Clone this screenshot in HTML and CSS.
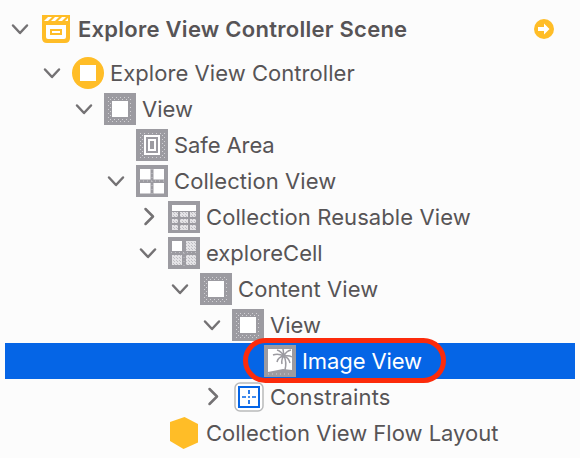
FILE: index.html
```
<!DOCTYPE html>
<html lang="en">
<head>
<meta charset="utf-8">
<title>Document Outline</title>
<link rel="stylesheet" href="styles.css">
</head>
<body>
<svg class="defs" aria-hidden="true">
  <defs>
    <pattern id="dots" width="4" height="4" patternUnits="userSpaceOnUse"><path d="M0 0h1v1h-1zM2 2h1v1h-1z" fill="#d2d1d5"/></pattern>
    <pattern id="mesh" width="3" height="3" patternUnits="userSpaceOnUse"><path d="M0 0h3v3h-3z" fill="#e4e3e6"/><path d="M0 0h1v1h-1zM2 2h1v1h-1z" fill="#bebdc2"/></pattern>
    <symbol id="down" viewBox="0 0 24 24"><path d="M5 8.500l7 7.500 7-7.500" fill="none" stroke="#747274" stroke-width="2.500" stroke-linecap="round" stroke-linejoin="round"/></symbol>
    <symbol id="right" viewBox="0 0 24 24"><path d="M9.500 4l7.500 7.500-7.500 7.500" fill="none" stroke="#747274" stroke-width="2.500" stroke-linecap="round" stroke-linejoin="round"/></symbol>
    <symbol id="view" viewBox="0 0 32 32"><path d="M0 0h32v32H0z" fill="#9c9ba1"/><path d="M4 4h24v26H4z" fill="url(#dots)"/><path d="M7 7h18v18H7z" fill="#9c9ba1"/><path d="M8 8h16v16H8z" fill="#fff"/></symbol>
  </defs>
</svg>
<main class="outline">
  <div class="row scene">
    <svg class="chevron"><use href="#down"/></svg>
    <svg class="icon" viewBox="0 0 32 32"><path d="M2 2h28v23q0 5-5 5H7q-5 0-5-5z" fill="#ffbd27"/><path d="M4 8l4-4h4L8 8zM11 8l4-4h4l-4 4zM18 8l4-4h4l-4 4zM25 8l3-3v3z" fill="#fff"/><path d="M6 12h20v12q0 2-2 2H8q-2 0-2-2z" fill="#fff"/><path d="M11 17h10v4H11z" fill="#fff" stroke="#ffbd27" stroke-width="2"/></svg>
    <span class="label">Explore View Controller Scene</span>
    <svg class="entry" viewBox="0 0 20 20"><circle cx="10" cy="10" r="10" fill="#ffbd27"/><path d="M4 8h6V4.500l5.500 5.500-5.500 5.500V12H4z" fill="#fff"/></svg>
  </div>
  <div class="row controller">
    <svg class="chevron"><use href="#down"/></svg>
    <svg class="icon" viewBox="0 0 32 32"><circle cx="16" cy="16" r="16" fill="#ffbd27"/><path d="M8 8h16v16H8z" fill="#fff"/></svg>
    <span class="label">Explore View Controller</span>
  </div>
  <div class="row root-view">
    <svg class="chevron"><use href="#down"/></svg>
    <svg class="icon"><use href="#view"/></svg>
    <span class="label">View</span>
  </div>
  <div class="row safe-area">
    <span class="chevron"></span>
    <svg class="icon" viewBox="0 0 32 32"><path d="M0 0h32v32H0z" fill="#9c9ba1"/><path d="M3 4h26v26H3z" fill="url(#dots)"/><path d="M7 5h18v22H7z" fill="#9c9ba1"/><path d="M9 7h14v18H9z" fill="#9c9ba1" stroke="#fff" stroke-width="2"/><path d="M13 11h6v10h-6z" fill="none" stroke="#fff" stroke-width="2"/></svg>
    <span class="label">Safe Area</span>
  </div>
  <div class="row collection">
    <svg class="chevron"><use href="#down"/></svg>
    <svg class="icon" viewBox="0 0 32 32"><path d="M0 0h32v32H0z" fill="#9c9ba1"/><path d="M4 4h10.500v10.500H4zM17.500 4H28v10.500H17.500zM4 18h10.500v10.500H4zM17.500 18H28v10.500H17.500z" fill="#fff"/><path d="M3 16h26M16 4v25" stroke="#c8c7cc" stroke-dasharray="1 3"/></svg>
    <span class="label">Collection View</span>
  </div>
  <div class="row reusable">
    <svg class="chevron collapsed"><use href="#right"/></svg>
    <svg class="icon" viewBox="0 0 32 32"><path d="M0 0h32v32H0z" fill="#9c9ba1"/><path d="M4 4h24v6H4z" fill="#fff"/><path d="M4 11h6v5H4zM12 11h8v5h-8zM22 11h6v5h-6zM4 18h6v4H4zM12 18h8v4h-8zM22 18h6v4h-6zM4 24h6v5H4zM12 24h8v5h-8zM22 24h6v5h-6z" fill="url(#mesh)"/></svg>
    <span class="label">Collection Reusable View</span>
  </div>
  <div class="row cell">
    <svg class="chevron"><use href="#down"/></svg>
    <svg class="icon" viewBox="0 0 32 32"><path d="M0 0h32v32H0z" fill="#9c9ba1"/><path d="M4 4h10v10H4z" fill="#fff"/><path d="M18 4h10v10H18zM4 18h10v10H4zM18 18h10v10H18z" fill="url(#mesh)"/><path d="M3 15.500h26M16 16v13" stroke="#c3c2c7" stroke-dasharray="1 3"/></svg>
    <span class="label">exploreCell</span>
  </div>
  <div class="row content">
    <svg class="chevron"><use href="#down"/></svg>
    <svg class="icon"><use href="#view"/></svg>
    <span class="label">Content View</span>
  </div>
  <div class="row inner-view">
    <svg class="chevron"><use href="#down"/></svg>
    <svg class="icon"><use href="#view"/></svg>
    <span class="label">View</span>
  </div>
  <div class="row image selected">
    <span class="chevron"></span>
    <svg class="icon" viewBox="0 0 32 32"><path d="M0 0h32v32H0z" fill="#9c9ba1"/><path d="M4 4h24v21l-9-1-15 3z" fill="#fff"/><path d="M4 29h24" stroke="#cccbd0" stroke-dasharray="1 3"/><path d="M20 11q-6-3-11-1M20 11q-3-5-7-6M20 11q-6 1-7 6M20 11l-1-7M20 11q2-5 7-6M20 11q5-1 8 1M20 11q5 2 6 7M20 11q-3 3-2 8M20 11q3 6 1 14" fill="none" stroke="#9c9ba1" stroke-width="1.500"/></svg>
    <span class="label">Image View</span>
    <span class="highlight"></span>
  </div>
  <div class="row constraints">
    <svg class="chevron collapsed"><use href="#right"/></svg>
    <svg class="icon" viewBox="0 0 32 32"><rect x="3" y="2" width="28" height="28" rx="5" fill="#fff" stroke="#b9babb" stroke-width="1.500"/><path d="M7 6h20v20H7z" fill="#fff" stroke="#0565e6" stroke-width="2"/><path d="M17 9v4M17 19v4M10 16h4M20 16h4M16 16h2" stroke="#0565e6" stroke-width="1.700"/></svg>
    <span class="label">Constraints</span>
  </div>
  <div class="row flow">
    <span class="chevron"></span>
    <svg class="icon" viewBox="0 0 32 32"><path d="M16.500 0L30 7v18.500L15.500 32 2 24V5z" fill="#ffbd27"/></svg>
    <span class="label">Collection View Flow Layout</span>
  </div>
</main>
</body>
</html>
```
FILE: styles.css
```
body {
  margin: 0;
  background: #fcfcfc;
  color: #575456;
  font: 22px/36px Inter, "Liberation Sans", sans-serif;
}
.defs { position: absolute; width: 0; height: 0; }
.outline {
  box-sizing: border-box;
  height: 458px;
  padding: 3px 5px 0;
  overflow: hidden;
}
.row {
  position: relative;
  display: flex;
  align-items: center;
  height: 36px;
}
.chevron { width: 24px; height: 24px; margin-right: 8px; flex: none; }
.icon { width: 32px; height: 32px; flex: none; }
.label { margin-left: 6px; white-space: nowrap; }
.scene { height: 52px; padding-left: 3px; font-weight: 600; letter-spacing: 0.26px; }
.controller { padding-left: 35px; letter-spacing: 0.05px; }
.root-view { padding-left: 67px; }
.safe-area, .collection { padding-left: 99px; }
.safe-area { letter-spacing: -0.1px; }
.collection { letter-spacing: 0.08px; }
.reusable, .cell, .flow { padding-left: 131px; }
.reusable { letter-spacing: 0.09px; }
.content { padding-left: 163px; letter-spacing: 0.08px; }
.inner-view, .constraints { padding-left: 195px; }
.constraints { letter-spacing: 0.18px; }
.image { padding-left: 227px; letter-spacing: -0.1px; }
.entry { width: 20px; height: 20px; margin: 0 21px 0 auto; }
.selected { background: #0565e6; color: #fff; }
.highlight {
  position: absolute;
  left: 238px;
  top: -5px;
  z-index: 1;
  box-sizing: border-box;
  width: 203px;
  height: 45px;
  border: 5px solid #fc2b0b;
  border-radius: 23px;
}
```
